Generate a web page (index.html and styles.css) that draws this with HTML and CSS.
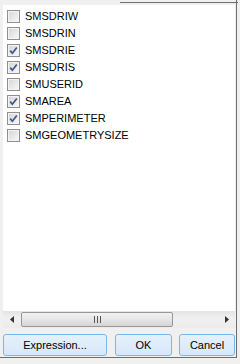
FILE: index.html
```html
<!DOCTYPE html>
<html lang="en">
<head>
    <meta charset="UTF-8">
    <meta name="viewport" content="width=device-width, initial-scale=1.0">
    <title>Select Fields</title>
    <link rel="stylesheet" href="styles.css">
</head>
<body>
    <div class="dialog">
        <div class="list-box">
            <ul class="field-list">
                <li class="field"><span class="check"></span><span class="field-name">SMSDRIW</span></li>
                <li class="field"><span class="check"></span><span class="field-name">SMSDRIN</span></li>
                <li class="field"><span class="check checked"><svg viewBox="0 0 11 11" width="11" height="11"><path d="M2.2 5.6 L4.4 8.2 L8.8 2.4" fill="none" stroke="#3d5688" stroke-width="1.7"/></svg></span><span class="field-name">SMSDRIE</span></li>
                <li class="field"><span class="check checked"><svg viewBox="0 0 11 11" width="11" height="11"><path d="M2.2 5.6 L4.4 8.2 L8.8 2.4" fill="none" stroke="#3d5688" stroke-width="1.7"/></svg></span><span class="field-name">SMSDRIS</span></li>
                <li class="field"><span class="check"></span><span class="field-name">SMUSERID</span></li>
                <li class="field"><span class="check checked"><svg viewBox="0 0 11 11" width="11" height="11"><path d="M2.2 5.6 L4.4 8.2 L8.8 2.4" fill="none" stroke="#3d5688" stroke-width="1.7"/></svg></span><span class="field-name">SMAREA</span></li>
                <li class="field"><span class="check checked"><svg viewBox="0 0 11 11" width="11" height="11"><path d="M2.2 5.6 L4.4 8.2 L8.8 2.4" fill="none" stroke="#3d5688" stroke-width="1.7"/></svg></span><span class="field-name">SMPERIMETER</span></li>
                <li class="field"><span class="check"></span><span class="field-name">SMGEOMETRYSIZE</span></li>
            </ul>
            <div class="hscroll">
                <span class="arrow"><svg viewBox="0 0 4 7" width="4" height="7"><path d="M4 0 L0 3.5 L4 7 Z" fill="#333"/></svg></span>
                <div class="track">
                    <div class="thumb">
                        <svg viewBox="0 0 7 7" width="7" height="7"><path d="M0.5 0 V7 M3.5 0 V7 M6.5 0 V7" stroke="#555" stroke-width="1"/></svg>
                    </div>
                </div>
                <span class="arrow"><svg viewBox="0 0 4 7" width="4" height="7"><path d="M0 0 L4 3.5 L0 7 Z" fill="#333"/></svg></span>
            </div>
        </div>

        <div class="buttons">
            <button class="btn btn-expression">Expression...</button>
            <button class="btn btn-ok">OK</button>
            <button class="btn btn-cancel">Cancel</button>
        </div>
    </div>
</body>
</html>
```

FILE: styles.css
```css
body {
    margin: 0;
    padding: 0 2px 5px 0;
    /* window frame edge showing along the top right */
    background: linear-gradient(to right, transparent 120px, #6e6e6e 120px) 0 2px / 238px 1px no-repeat, #f0f0f0;
    font-family: 'Liberation Sans', Arial, sans-serif;
    font-size: 11px;
    color: #000;
}

.dialog {
    width: 237px;
    height: 358px;
    border-right: 1px solid #6e6e6e;
    border-bottom: 1px solid #6e6e6e;
    padding-top: 5px;
    box-sizing: border-box;
}

.list-box {
    margin-left: 3px;
    width: 232px;
    background-color: #fff;
}

.field-list {
    list-style: none;
    margin: 0;
    padding: 3px 0 0 4px;
    height: 303px;
}

.field {
    display: flex;
    align-items: center;
    height: 17px;
}

.check {
    width: 13px;
    height: 13px;
    box-sizing: border-box;
    border: 1px solid #8e8f8f;
    background: linear-gradient(135deg, #d4d4d4, #f9f9f9);
    box-shadow: inset 0 0 0 1px #f4f4f4;
    margin-right: 5px;
    display: flex;
    align-items: center;
    justify-content: center;
}

.check svg {
    display: block;
}

.field-name {
    line-height: 17px;
}

/* horizontal scroll bar */
.hscroll {
    display: flex;
    align-items: center;
    height: 17px;
    background: linear-gradient(#e3e3e3, #f0f0f0 40%, #ececec);
}

.arrow {
    width: 17px;
    height: 17px;
    display: flex;
    align-items: center;
    justify-content: center;
}

.arrow svg {
    display: block;
}

.track {
    flex: 1;
    height: 17px;
    display: flex;
    align-items: center;
}

.thumb {
    width: 152px;
    height: 15px;
    margin-left: 1px;
    box-sizing: border-box;
    border: 1px solid #979797;
    border-radius: 2px;
    background: linear-gradient(#f2f2f2, #e6e6e6 50%, #d5d5d5);
    display: flex;
    align-items: center;
    justify-content: center;
}

.thumb svg {
    display: block;
}

/* dialog buttons */
.buttons {
    display: flex;
    margin: 6px 0 0 3px;
    width: 232px;
}

.btn {
    height: 22px;
    padding: 0;
    border: 1px solid #7eb4ea;
    border-radius: 3px;
    background: linear-gradient(#e5f1fb, #d6e8f9);
    font-family: 'Liberation Sans', Arial, sans-serif;
    font-size: 11px;
    color: #000;
}

.btn-expression {
    width: 104px;
    margin-right: auto;
}

.btn-ok {
    width: 57px;
    margin-right: 7px;
}

.btn-cancel {
    width: 56px;
}
```
